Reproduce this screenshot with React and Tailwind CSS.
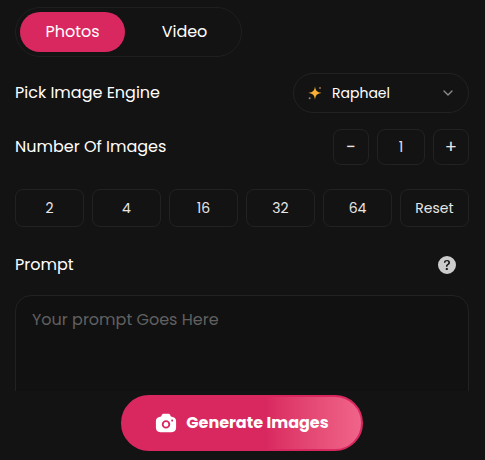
import { useState } from "react"
import { BsQuestionCircleFill } from "react-icons/bs"
import { FiChevronDown } from "react-icons/fi"

const presets = [2, 4, 16, 32, 64]

const boxClass = "rounded-lg border border-[#222222] text-[#e6e6e6]"

const Sparkle = ({ className }) => (
  <svg viewBox="0 0 24 24" className={className} aria-hidden="true">
    <path
      d="M12 2c.8 6.500 2.500 8.800 10 10-7.500 1.200-9.200 3.500-10 10-.8-6.500-2.500-8.800-10-10 7.500-1.200 9.200-3.500 10-10z"
      fill="#fbb034"
    />
    <circle cx="19.500" cy="4.500" r="1.600" fill="#8f6a4a" />
    <circle cx="4" cy="20" r="1.500" fill="#8a8a8a" />
  </svg>
)

const Camera = ({ className }) => (
  <svg viewBox="0 0 24 24" className={className} aria-hidden="true">
    <path
      fill="currentColor"
      fillRule="evenodd"
      d="M9.500 2h5c1.100 0 1.900.6 2.200 1.600l.2.600c.2.600.7 1 1.400 1.100C21 5.500 23 7.300 23 9.900V17c0 3.200-1.700 5-5 5H6c-3.300 0-5-1.800-5-5V9.900c0-2.600 2-4.400 4.700-4.600.7-.1 1.200-.5 1.400-1.100l.2-.6C7.600 2.600 8.400 2 9.500 2zM12 8.900a4.600 4.600 0 1 0 0 9.200 4.600 4.600 0 0 0 0-9.200zm0 2a2.600 2.600 0 1 1 0 5.200 2.600 2.600 0 0 1 0-5.200zM18.700 8.300a1.100 1.100 0 1 0 0 2.200 1.100 1.100 0 0 0 0-2.200z"
    />
  </svg>
)

const Tab = ({ active, onClick, children }) => (
  <button
    type="button"
    onClick={onClick}
    className={`h-10 w-[105px] rounded-full text-base text-white ${active ? "bg-[#d92860]" : ""}`}
  >
    {children}
  </button>
)

export default function App() {
  const [tab, setTab] = useState("photos")
  const [count, setCount] = useState(1)

  return (
    <div className="flex h-screen flex-col bg-[#131313] font-['Poppins','Inter',sans-serif] text-base text-white">
      <main className="min-h-0 flex-1 overflow-y-auto pt-[7px] pr-4 pl-[15px] [scrollbar-width:none]">
        <div className="flex w-fit gap-[7px] rounded-full border border-[#1f1f1f] p-1">
          <Tab active={tab === "photos"} onClick={() => setTab("photos")}>
            Photos
          </Tab>
          <Tab active={tab === "video"} onClick={() => setTab("video")}>
            Video
          </Tab>
        </div>

        <div className="mt-4 flex items-center justify-between">
          <label htmlFor="engine">Pick Image Engine</label>
          <div className="relative">
            <select
              id="engine"
              className="h-10 w-44 appearance-none rounded-full border border-[#222222] bg-transparent pr-8 pl-[38px] text-sm"
            >
              <option>Raphael</option>
            </select>
            <Sparkle className="pointer-events-none absolute top-3 left-[14px] size-4" />
            <FiChevronDown className="pointer-events-none absolute top-3 right-[13px] size-4 text-[#8c8c8c]" />
          </div>
        </div>

        <div className="mt-4 flex items-center justify-between">
          <label htmlFor="count">Number Of Images</label>
          <div className="flex gap-2">
            <button
              type="button"
              aria-label="Fewer images"
              onClick={() => setCount(Math.max(1, count - 1))}
              className={`size-9 text-lg leading-none ${boxClass}`}
            >
              −
            </button>
            <input
              id="count"
              type="text"
              inputMode="numeric"
              value={count}
              onChange={(e) => setCount(Number(e.target.value) || 1)}
              className={`h-9 w-12 bg-transparent text-center text-sm ${boxClass}`}
            />
            <button
              type="button"
              aria-label="More images"
              onClick={() => setCount(count + 1)}
              className={`size-9 text-lg leading-none ${boxClass}`}
            >
              +
            </button>
          </div>
        </div>

        <div className="mt-6 grid grid-cols-6 gap-2">
          {presets.map((n) => (
            <button key={n} type="button" onClick={() => setCount(n)} className={`h-[38px] text-sm ${boxClass}`}>
              {n}
            </button>
          ))}
          <button type="button" onClick={() => setCount(1)} className={`h-[38px] text-sm ${boxClass}`}>
            Reset
          </button>
        </div>

        <div className="mt-[26px] flex items-center justify-between pr-[13px]">
          <label htmlFor="prompt">Prompt</label>
          <button type="button" aria-label="Prompt help">
            <BsQuestionCircleFill className="size-[18px] text-[#cccccc]" />
          </button>
        </div>

        <textarea
          id="prompt"
          placeholder="Your prompt Goes Here"
          className="mt-[18px] block h-40 w-full resize-none rounded-2xl border border-[#222222] bg-[#111111] px-4 py-3 placeholder:text-[#606060]"
        />
      </main>

      <footer className="flex justify-center pt-1 pr-4 pb-[9px] pl-[15px]">
        <button
          type="button"
          className="flex h-14 w-[242px] items-center justify-center gap-[9px] rounded-full border-2 border-[#d92860] bg-linear-to-r from-[#d92860] from-60% to-[#f0648a] font-bold"
        >
          <Camera className="size-[22px]" />
          Generate Images
        </button>
      </footer>
    </div>
  )
}
